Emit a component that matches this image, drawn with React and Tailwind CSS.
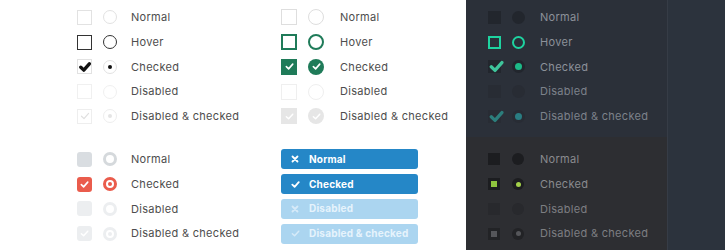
import React from 'react'

const font = { fontFamily: 'Inter, "Open Sans", sans-serif' }

const Check = ({ color = '#fff', w = 2, size = 10 }) => (
    <svg width={size} height={size} viewBox="0 0 10 10" fill="none">
        <path d="M1.5 5.2 L4 7.6 L8.6 2.4" stroke={color} strokeWidth={w} strokeLinecap="round" strokeLinejoin="round" />
    </svg>
)

const Cross = ({ color = '#fff' }) => (
    <svg width="8" height="8" viewBox="0 0 8 8" fill="none">
        <path d="M1.5 1.5 L6.5 6.5 M6.5 1.5 L1.5 6.5" stroke={color} strokeWidth="1.8" strokeLinecap="round" />
    </svg>
)

const Row = ({ box, radio, label, labelClass, gap = 'gap-[11px]', labelGap = 'ml-[15px]' }) => (
    <div className="flex h-[24.75px] items-center">
        <div className={`flex items-center ${gap}`}>
            {box}
            {radio}
        </div>
        <span className={`${labelGap} whitespace-nowrap text-[11px] tracking-[0.3px] ${labelClass}`}>{label}</span>
    </div>
)

// plain column
const plain = [
    {
        label: 'Normal',
        box: <div className="h-[15px] w-[15px] border border-[#e2e2e2]" />,
        radio: <div className="h-[14px] w-[14px] rounded-full border border-[#e2e2e2]" />,
    },
    {
        label: 'Hover',
        box: <div className="h-[15px] w-[15px] border-[1.5px] border-[#333]" />,
        radio: <div className="h-[14px] w-[14px] rounded-full border-[1.5px] border-[#333]" />,
    },
    {
        label: 'Checked',
        box: <div className="flex h-[15px] w-[15px] items-center justify-center border border-[#e2e2e2]"><Check color="#111" w={2.8} size={12} /></div>,
        radio: <div className="flex h-[14px] w-[14px] items-center justify-center rounded-full border border-[#e2e2e2]"><div className="h-[4px] w-[4px] rounded-full bg-[#111]" /></div>,
    },
    {
        label: 'Disabled',
        box: <div className="h-[15px] w-[15px] border border-[#f0f0f0]" />,
        radio: <div className="h-[14px] w-[14px] rounded-full border border-[#f0f0f0]" />,
    },
    {
        label: 'Disabled & checked',
        box: <div className="flex h-[15px] w-[15px] items-center justify-center border border-[#eeeeee]"><Check color="#e0e0e0" w={1.2} size={10} /></div>,
        radio: <div className="flex h-[14px] w-[14px] items-center justify-center rounded-full border border-[#eeeeee]"><div className="h-[4px] w-[4px] rounded-full bg-[#e4e4e4]" /></div>,
    },
]

const green = [
    {
        label: 'Normal',
        box: <div className="h-[16px] w-[16px] border border-[#dedede]" />,
        radio: <div className="h-[16px] w-[16px] rounded-full border border-[#dedede]" />,
    },
    {
        label: 'Hover',
        box: <div className="h-[16px] w-[16px] border-2 border-[#1f7b59]" />,
        radio: <div className="h-[16px] w-[16px] rounded-full border-2 border-[#1f7b59]" />,
    },
    {
        label: 'Checked',
        box: <div className="flex h-[16px] w-[16px] items-center justify-center bg-[#1f7b59]"><Check size={9} w={1.8} /></div>,
        radio: <div className="flex h-[16px] w-[16px] items-center justify-center rounded-full bg-[#1f7b59]"><Check size={9} w={1.8} /></div>,
    },
    {
        label: 'Disabled',
        box: <div className="h-[16px] w-[16px] border border-[#efefef]" />,
        radio: <div className="h-[16px] w-[16px] rounded-full border border-[#efefef]" />,
    },
    {
        label: 'Disabled & checked',
        box: <div className="flex h-[16px] w-[16px] items-center justify-center bg-[#e6e6e6]"><Check size={9} w={1.6} /></div>,
        radio: <div className="flex h-[16px] w-[16px] items-center justify-center rounded-full bg-[#e6e6e6]"><Check size={9} w={1.6} /></div>,
    },
]

const dark = [
    {
        label: 'Normal',
        box: <div className="h-[13px] w-[13px] bg-[#22262d]" />,
        radio: <div className="h-[13px] w-[13px] rounded-full bg-[#22262d]" />,
        cls: 'text-[#8c919a]',
    },
    {
        label: 'Hover',
        box: <div className="h-[13px] w-[13px] border-2 border-[#1ed3a0]" />,
        radio: <div className="h-[13px] w-[13px] rounded-full border-2 border-[#1ed3a0]" />,
        cls: 'text-[#8c919a]',
    },
    {
        label: 'Checked',
        box: <div className="relative h-[13px] w-[13px] bg-[#22262d]"><div className="absolute left-[1px] -top-[1px]"><Check color="#3fc49b" w={2.2} size={15} /></div></div>,
        radio: <div className="flex h-[13px] w-[13px] items-center justify-center rounded-full bg-[#22262d]"><div className="h-[7px] w-[7px] rounded-full bg-[#1dba88]" /></div>,
        cls: 'text-[#8c919a]',
    },
    {
        label: 'Disabled',
        box: <div className="h-[13px] w-[13px] bg-[#282c34]" />,
        radio: <div className="h-[13px] w-[13px] rounded-full bg-[#282c34]" />,
        cls: 'text-[#7d828b]',
    },
    {
        label: 'Disabled & checked',
        box: <div className="relative h-[13px] w-[13px] bg-[#282c34]"><div className="absolute left-[1px] -top-[1px]"><Check color="#2c7e7c" w={2.2} size={15} /></div></div>,
        radio: <div className="flex h-[13px] w-[13px] items-center justify-center rounded-full bg-[#282c34]"><div className="h-[7px] w-[7px] rounded-full bg-[#2a7d82]" /></div>,
        cls: 'text-[#7d828b]',
    },
]

const red = [
    {
        label: 'Normal',
        box: <div className="h-[15px] w-[15px] rounded-[3px] bg-[#d9dde1]" />,
        radio: <div className="h-[14px] w-[14px] rounded-full border-[3px] border-[#d5d9dc]" />,
    },
    {
        label: 'Checked',
        box: <div className="flex h-[15px] w-[15px] items-center justify-center rounded-[3px] bg-[#ea5c4c]"><Check size={9} w={1.8} /></div>,
        radio: <div className="flex h-[14px] w-[14px] items-center justify-center rounded-full border-[3px] border-[#ea5c4c]"><div className="h-[4px] w-[4px] rounded-full bg-[#ea5c4c]" /></div>,
    },
    {
        label: 'Disabled',
        box: <div className="h-[15px] w-[15px] rounded-[3px] bg-[#eceef0]" />,
        radio: <div className="h-[14px] w-[14px] rounded-full border-[3px] border-[#eceef0]" />,
    },
    {
        label: 'Disabled & checked',
        box: <div className="flex h-[15px] w-[15px] items-center justify-center rounded-[3px] bg-[#eceef0]"><Check size={9} w={1.6} /></div>,
        radio: <div className="flex h-[14px] w-[14px] items-center justify-center rounded-full border-[3px] border-[#eceef0]"><div className="h-[4px] w-[4px] rounded-full bg-[#eceef0]" /></div>,
    },
]

const lime = [
    {
        label: 'Normal',
        box: <div className="h-[12px] w-[12px] bg-[#1c1d20]" />,
        radio: <div className="h-[12px] w-[12px] rounded-full bg-[#1c1d20]" />,
        cls: 'text-[#8a8b8f]',
    },
    {
        label: 'Checked',
        box: <div className="flex h-[12px] w-[12px] items-center justify-center bg-[#1c1d20]"><div className="h-[6px] w-[6px] bg-[#8fc43e]" /></div>,
        radio: <div className="flex h-[12px] w-[12px] items-center justify-center rounded-full bg-[#1c1d20]"><div className="h-[5px] w-[5px] rounded-full bg-[#a3d04a]" /></div>,
        cls: 'text-[#8a8b8f]',
    },
    {
        label: 'Disabled',
        box: <div className="h-[12px] w-[12px] bg-[#28292d]" />,
        radio: <div className="h-[12px] w-[12px] rounded-full bg-[#28292d]" />,
        cls: 'text-[#7d7e82]',
    },
    {
        label: 'Disabled & checked',
        box: <div className="flex h-[12px] w-[12px] items-center justify-center bg-[#222326]"><div className="h-[6px] w-[6px] bg-[#55565a]" /></div>,
        radio: <div className="flex h-[12px] w-[12px] items-center justify-center rounded-full bg-[#222326]"><div className="h-[5px] w-[5px] rounded-full bg-[#55565a]" /></div>,
        cls: 'text-[#7d7e82]',
    },
]

const toggles = [
    { label: 'Normal', icon: <Cross />, cls: 'bg-[#2587c7] text-white' },
    { label: 'Checked', icon: <Check size={9} w={2} />, cls: 'bg-[#2587c7] text-white' },
    { label: 'Disabled', icon: <Cross color="#d6eaf8" />, cls: 'bg-[#abd5f0] text-[#e6f3fc]' },
    { label: 'Disabled & checked', icon: <Check size={9} w={1.6} color="#d6eaf8" />, cls: 'bg-[#abd5f0] text-[#e6f3fc]' },
]

const App = () => {
    return (
        <div className="flex h-[250px] w-[725px] overflow-hidden bg-white" style={font}>
            {/* light side */}
            <div className="flex w-[466px] flex-col">
                <div className="flex h-[137px] pt-[5px]">
                    <div className="ml-[77px] w-[204px]">
                        {plain.map((r) => (
                            <Row key={r.label} {...r} labelClass="text-[#4d4d4d]" gap="gap-[11px]" labelGap="ml-[14px]" />
                        ))}
                    </div>
                    <div>
                        {green.map((r) => (
                            <Row key={r.label} {...r} labelClass="text-[#4d4d4d]" gap="gap-[11px]" labelGap="ml-[16px]" />
                        ))}
                    </div>
                </div>
                <div className="flex h-[113px] pt-[10px]">
                    <div className="ml-[77px] w-[204px]">
                        {red.map((r) => (
                            <Row key={r.label} {...r} labelClass="text-[#4d4d4d]" gap="gap-[11px]" labelGap="ml-[14px]" />
                        ))}
                    </div>
                    <div className="w-[137px]">
                        {toggles.map((t) => (
                            <div key={t.label} className="flex h-[24.75px] items-center">
                                <div className={`flex h-[20px] w-full items-center rounded-[3px] ${t.cls}`}>
                                    <div className="flex w-[28px] justify-center">{t.icon}</div>
                                    <span className="whitespace-nowrap text-[10px] font-bold tracking-[0.2px]">{t.label}</span>
                                </div>
                            </div>
                        ))}
                    </div>
                </div>
            </div>

            {/* dark side */}
            <div className="flex w-[201px] flex-col">
                <div className="h-[137px] bg-[#2b3039] pt-[5px] pl-[22px]">
                    {dark.map((r) => (
                        <Row key={r.label} {...r} labelClass={r.cls} gap="gap-[11px]" labelGap="ml-[15px]" />
                    ))}
                </div>
                <div className="h-[113px] bg-[#2d2e32] pt-[10px] pl-[22px]">
                    {lime.map((r) => (
                        <Row key={r.label} {...r} labelClass={r.cls} gap="gap-[12px]" labelGap="ml-[16px]" />
                    ))}
                </div>
            </div>
            <div className="flex-1 border-l border-[#363c46] bg-[#2c333d]" />
        </div>
    )
}

export default App
